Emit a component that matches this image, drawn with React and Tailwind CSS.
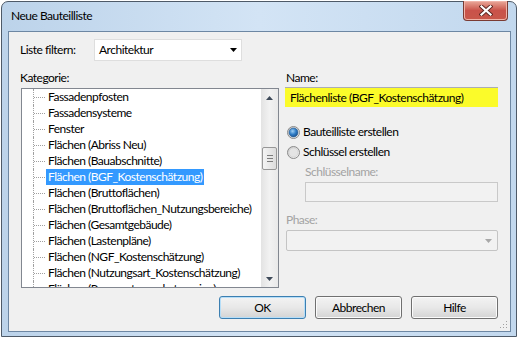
import React from "react";

// Einträge der Kategorie-Baumansicht (sichtbarer Ausschnitt)
const categories = [
  "Fassadenpfosten",
  "Fassadensysteme",
  "Fenster",
  "Flächen (Abriss Neu)",
  "Flächen (Bauabschnitte)",
  "Flächen (BGF_Kostenschätzung)",
  "Flächen (Bruttoflächen)",
  "Flächen (Bruttoflächen_Nutzungsbereiche)",
  "Flächen (Gesamtgebäude)",
  "Flächen (Lastenpläne)",
  "Flächen (NGF_Kostenschätzung)",
  "Flächen (Nutzungsart_Kostenschätzung)",
  "Flächen (Raumnutzungskategorien)",
];

const selected = "Flächen (BGF_Kostenschätzung)";

const TreeRow = ({ label }) => {
  const isSel = label === selected;
  return (
    <div className="flex h-[16px] shrink-0 items-stretch">
      <div className="w-[11px] shrink-0" />
      <div className="flex w-[13px] shrink-0 items-center border-l border-dotted border-[#a0a0a0]">
        <div className="w-[11px] border-t border-dotted border-[#a0a0a0]" />
      </div>
      <span
        className={
          isSel
            ? "shrink-0 whitespace-nowrap bg-[#3399ff] px-[2px] leading-[16px] text-white"
            : "shrink-0 whitespace-nowrap px-[2px] leading-[16px] text-black"
        }
      >
        {label}
      </span>
    </div>
  );
};

const Arrow = ({ up, color = "#000" }) => (
  <svg width="7" height="4" viewBox="0 0 7 4">
    {up ? (
      <path d="M0 4 L7 4 L3.5 0 Z" fill={color} />
    ) : (
      <path d="M0 0 L7 0 L3.5 4 Z" fill={color} />
    )}
  </svg>
);

const Radio = ({ checked }) => (
  <svg width="13" height="13" viewBox="0 0 13 13">
    <defs>
      <linearGradient id={checked ? "rbg1" : "rbg0"} x1="0" y1="0" x2="1" y2="1">
        <stop offset="0" stopColor="#c8c8c8" />
        <stop offset="1" stopColor="#fafafa" />
      </linearGradient>
      <radialGradient id="rdot" cx="0.4" cy="0.35" r="0.7">
        <stop offset="0" stopColor="#9fd0f5" />
        <stop offset="0.55" stopColor="#2d7ac4" />
        <stop offset="1" stopColor="#1a4f8a" />
      </radialGradient>
    </defs>
    <circle cx="6.5" cy="6.5" r="6" fill={`url(#${checked ? "rbg1" : "rbg0"})`} stroke="#8a8a8a" />
    <circle cx="6.5" cy="6.5" r="4.5" fill={checked ? "url(#rdot)" : "#e4e4e4"} stroke={checked ? "#2c5d8f" : "#cfcfcf"} strokeWidth="0.6" />
  </svg>
);

const Button = ({ children, primary }) => (
  <div
    className={
      "flex h-[23px] w-[87px] items-center justify-center rounded-[3px] border bg-gradient-to-b from-[#f3f3f3] via-[#e8e8e8] to-[#d4d4d4] text-black " +
      (primary ? "border-[#3c7fb1] shadow-[inset_0_0_0_1px_#b6def8]" : "border-[#707070] shadow-[inset_0_0_0_1px_#fbfbfb]")
    }
  >
    {children}
  </div>
);

export default function App() {
  return (
    <div className="h-[338px] w-[518px] overflow-hidden bg-white font-['Segoe_UI','Lato',sans-serif] text-[12px] tracking-[-0.5px]">
      <div className="ml-[1px] mt-[1px] flex h-[336px] w-[516px] flex-col rounded-t-[7px] border border-[#4e5a68] bg-gradient-to-r from-[#bcd3ea] via-[#d3e4f5] to-[#c2d8ee] pb-[4px] pl-[6px] pr-[5px]">
        {/* Titelleiste */}
        <div className="flex h-[29px] shrink-0 items-start">
          <div className="mt-[6px] pl-[3px] text-[12px] leading-[16px] text-black">Neue Bauteilliste</div>
          <div className="ml-auto mr-[3px] mt-[-1px] flex h-[20px] w-[45px] items-center justify-center rounded-b-[4px] border border-t-0 border-[#7a3b33] bg-gradient-to-b from-[#e9a99b] via-[#c9524a] to-[#c8574a] shadow-[inset_0_0_0_1px_#f0b3a8]">
            <svg width="14" height="11" viewBox="0 0 14 11">
              <path d="M2.5 1.5 L11.5 9.5 M11.5 1.5 L2.5 9.5" stroke="#5a2620" strokeWidth="4" strokeLinecap="square" />
              <path d="M2.5 1.5 L11.5 9.5 M11.5 1.5 L2.5 9.5" stroke="#ffffff" strokeWidth="2.2" strokeLinecap="square" />
            </svg>
          </div>
        </div>

        {/* Client-Bereich */}
        <div className="relative flex flex-1 flex-col border border-[#6d87a3] bg-[#f0f0f0] pr-[12px]">
          <div className="mt-[7px] flex items-center pl-[11px]">
            <span className="w-[74px] text-black">Liste filtern:</span>
            <div className="flex h-[22px] w-[148px] items-center border border-[#dedede] bg-white pl-[4px] pr-[2px]">
              <span className="text-black">Architektur</span>
              <div className="ml-auto mr-[1px] flex w-[10px] justify-center">
                <Arrow />
              </div>
            </div>
          </div>

          <div className="mt-[9px] flex pl-[11px]">
            {/* Kategorie */}
            <div className="flex w-[259px] flex-col">
              <span className="leading-[16px] text-black">Kategorie:</span>
              <div className="ml-[1px] mt-[2px] flex h-[200px] w-[258px] border border-[#828790] bg-white">
                <div className="flex min-w-0 flex-1 flex-col overflow-hidden">
                  {categories.map((c) => (
                    <TreeRow key={c} label={c} />
                  ))}
                </div>
                <div className="flex w-[17px] shrink-0 flex-col bg-gradient-to-r from-[#e3e3e3] via-[#f2f2f2] to-[#e9e9e9]">
                  <div className="flex h-[17px] items-center justify-center">
                    <Arrow up color="#3e4a59" />
                  </div>
                  <div className="mx-[1px] mt-[41px] flex h-[23px] flex-col items-center justify-center gap-[2px] rounded-[2px] border border-[#979797] bg-gradient-to-r from-[#f4f4f4] to-[#dcdcdc]">
                    <div className="h-px w-[6px] bg-[#7c7c7c]" />
                    <div className="h-px w-[6px] bg-[#7c7c7c]" />
                    <div className="h-px w-[6px] bg-[#7c7c7c]" />
                  </div>
                  <div className="mt-auto flex h-[17px] items-center justify-center">
                    <Arrow color="#3e4a59" />
                  </div>
                </div>
              </div>
            </div>

            {/* Name / Optionen */}
            <div className="ml-auto flex w-[213px] flex-col">
              <span className="pl-[1px] leading-[16px] text-black">Name:</span>
              <div className="mt-[1px] flex h-[20px] items-center border-t border-[#abadb3] bg-[#fbfb2a] pl-[5px]">
                <span className="text-black">Flächenliste (BGF_Kostenschätzung)</span>
              </div>
              <div className="mt-[17px] flex h-[16px] items-center pl-[2px]">
                <Radio checked />
                <span className="ml-[3px] text-black">Bauteilliste erstellen</span>
              </div>
              <div className="mt-[4px] flex h-[16px] items-center pl-[2px]">
                <Radio />
                <span className="ml-[3px] text-black">Schlüssel erstellen</span>
              </div>
              <span className="mt-[4px] pl-[20px] leading-[16px] text-[#a3a3a3]">Schlüsselname:</span>
              <div className="ml-[20px] mt-[2px] h-[20px] border border-[#c9c9c9] bg-[#f2f2f2]" />
              <span className="mt-[10px] pl-[1px] leading-[16px] text-[#a3a3a3]">Phase:</span>
              <div className="ml-[1px] mt-[2px] flex h-[21px] items-center justify-end rounded-[2px] border border-[#c4c4c4] bg-[#f2f2f2] pr-[5px]">
                <Arrow color="#a8a8a8" />
              </div>
            </div>
          </div>

          {/* Schaltflächen */}
          <div className="mt-[8px] flex justify-end gap-[9px]">
            <Button primary>OK</Button>
            <Button>Abbrechen</Button>
            <Button>Hilfe</Button>
          </div>

          {/* Größenänderungs-Griff */}
          <svg className="absolute bottom-[2px] right-[2px]" width="10" height="10" viewBox="0 0 10 10">
            {[
              [8, 2],
              [8, 5],
              [5, 5],
              [8, 8],
              [5, 8],
              [2, 8],
            ].map(([x, y]) => (
              <rect key={`${x}-${y}`} x={x} y={y} width="1" height="1" fill="#a0a0a0" />
            ))}
          </svg>
        </div>
      </div>
    </div>
  );
}
